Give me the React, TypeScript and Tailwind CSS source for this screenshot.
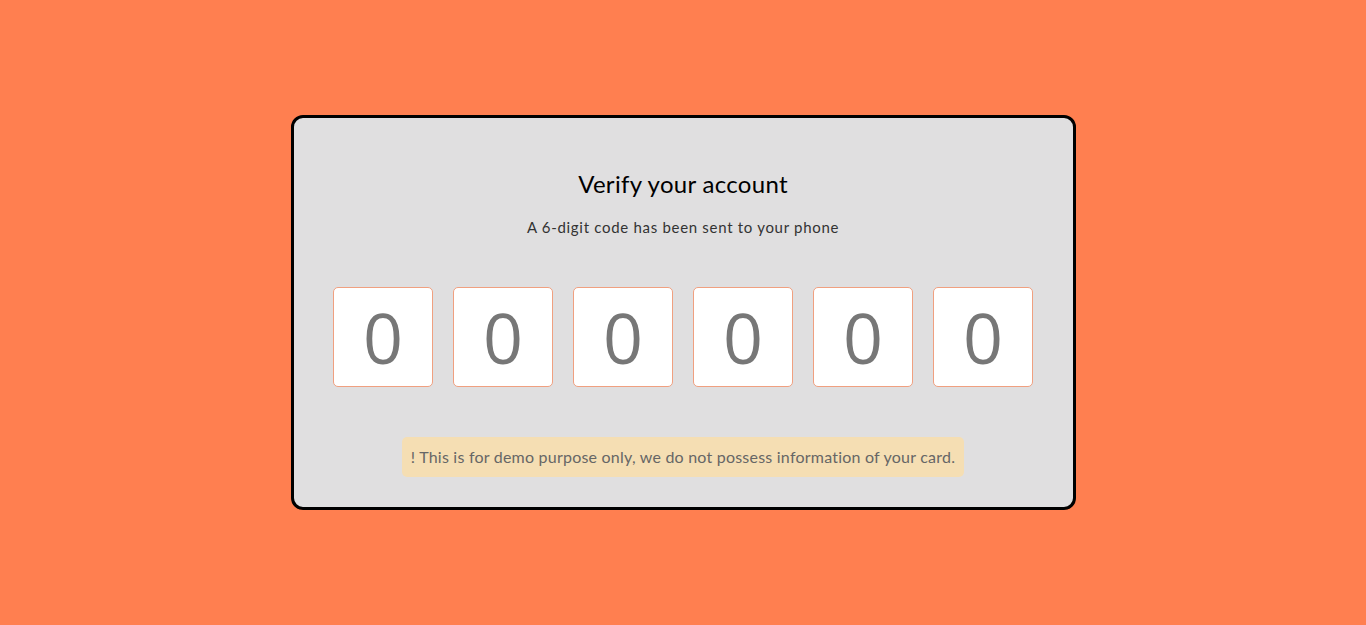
import React from 'react';

const digits = ['0', '0', '0', '0', '0', '0'];

export default function App() {
  return (
    <div className="min-h-screen w-full bg-[#ff7f50] flex items-center justify-center" style={{ fontFamily: 'Lato, "Noto Sans", sans-serif' }}>
      <div className="w-[785px] h-[395px] bg-[#e0dfe0] border-[3px] border-black rounded-[12px] flex flex-col items-center pt-[50px]">
        <h1 className="text-[24px] leading-[32px] text-black font-normal tracking-[0.3px]">Verify your account</h1>
        <p className="mt-[17px] text-[15px] leading-[20px] text-[#333] tracking-[0.7px]">A 6-digit code has been sent to your phone</p>
        <div className="mt-[50px] flex gap-[20px]">
          {digits.map((d, i) => (
            <div
              key={i}
              className="w-[100px] h-[100px] bg-white border border-[#f0a080] rounded-[5px] flex items-center justify-center text-[70px] text-[#777]"
              style={{ fontFamily: '"Open Sans", sans-serif' }}
            >
              {d}
            </div>
          ))}
        </div>
        <div className="mt-[50px] bg-[#f5deb3] rounded-[5px] px-[9px] h-[40px] flex items-center text-[16px] text-[#666] tracking-[0.22px]">
          ! This is for demo purpose only, we do not possess information of your card.
        </div>
      </div>
    </div>
  );
}
